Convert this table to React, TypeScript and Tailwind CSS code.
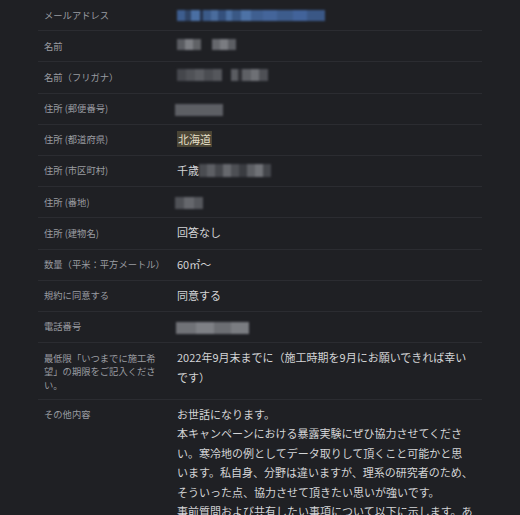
import React from 'react';

type Cell = { w: string; c: string };

// pixelated redaction blocks, as in the reference
function Mosaic({ cells, className }: { cells: Cell[]; className: string }) {
    return (
        <span className={`inline-flex align-middle blur-[0.8px] ${className}`}>
            {cells.map((cell, i) => (
                <span key={i} className={`${cell.w} ${cell.c} h-full`} />
            ))}
        </span>
    );
}

const emailCells: Cell[] = [
    { w: 'w-[8px]', c: 'bg-[#3d5d8e]' },
    { w: 'w-[6px]', c: 'bg-[#2f4466]' },
    { w: 'w-[9px]', c: 'bg-[#4a6fa3]' },
    { w: 'w-[3px]', c: 'bg-[#25324a]' },
    { w: 'w-[8px]', c: 'bg-[#3b5a88]' },
    { w: 'w-[7px]', c: 'bg-[#4a6c9d]' },
    { w: 'w-[8px]', c: 'bg-[#34507c]' },
    { w: 'w-[6px]', c: 'bg-[#4b6fa1]' },
    { w: 'w-[9px]', c: 'bg-[#3a5885]' },
    { w: 'w-[10px]', c: 'bg-[#4d72a6]' },
    { w: 'w-[12px]', c: 'bg-[#3f5f90]' },
    { w: 'w-[14px]', c: 'bg-[#44659a]' },
    { w: 'w-[16px]', c: 'bg-[#3d5c8c]' },
    { w: 'w-[14px]', c: 'bg-[#42639a]' },
    { w: 'w-[18px]', c: 'bg-[#3a5785]' },
];

function Gray({ w, c }: { w: string; c: string }) {
    return <Mosaic className={`${w} h-[12px]`} cells={[{ w: 'w-full', c }]} />;
}

const labelCls = 'pl-[6px] pr-2 pt-[8.5px] pb-[6.5px] text-[9.3px] leading-[13.5px] text-[#9a9ca1]';
const valueCls = 'pl-[7px] pr-2 pt-[5px] pb-[5.7px] text-[11px] leading-[19.5px] text-[#d3d4d6] whitespace-nowrap';

function Row({ label, children, last }: { label: React.ReactNode; children: React.ReactNode; last?: boolean }) {
    return (
        <div className={`grid grid-cols-[132px_1fr] ${last ? '' : 'border-b border-[#2b2c31]'}`}>
            <div className={labelCls}>{label}</div>
            <div className={valueCls}>{children}</div>
        </div>
    );
}

export default function App() {
    return (
        <div className="h-screen bg-[#1f2024] font-['Noto_Sans_CJK_JP','Noto_Sans',sans-serif] overflow-hidden">
            <div className="ml-[38px] w-[444px]">
                <Row label="メールアドレス">
                    <Mosaic className="h-[11px] w-[150px] mt-[-2px]" cells={emailCells} />
                </Row>
                <Row label="名前">
                    <span className="inline-flex gap-[11px] items-center">
                        <Mosaic className="h-[11px] w-[24px]" cells={[
                            { w: 'w-[8px]', c: 'bg-[#5a5c61]' },
                            { w: 'w-[8px]', c: 'bg-[#7c7e83]' },
                            { w: 'w-[8px]', c: 'bg-[#606266]' },
                        ]} />
                        <Mosaic className="h-[11px] w-[24px]" cells={[
                            { w: 'w-[8px]', c: 'bg-[#66686d]' },
                            { w: 'w-[8px]', c: 'bg-[#7a7c81]' },
                            { w: 'w-[8px]', c: 'bg-[#5c5e63]' },
                        ]} />
                    </span>
                </Row>
                <Row label="名前（フリガナ）">
                    <span className="inline-flex gap-[9px] items-center">
                        <Mosaic className="h-[12px] w-[45px]" cells={[
                            { w: 'w-[9px]', c: 'bg-[#45474c]' },
                            { w: 'w-[9px]', c: 'bg-[#505257]' },
                            { w: 'w-[9px]', c: 'bg-[#5a5c61]' },
                            { w: 'w-[9px]', c: 'bg-[#4b4d52]' },
                            { w: 'w-[9px]', c: 'bg-[#55575c]' },
                        ]} />
                        <Mosaic className="h-[12px] w-[37px]" cells={[
                            { w: 'w-[7px]', c: 'bg-[#5a5c61]' },
                            { w: 'w-[4px]', c: 'bg-[#2e2f34]' },
                            { w: 'w-[9px]', c: 'bg-[#5e6065]' },
                            { w: 'w-[8px]', c: 'bg-[#6e7075]' },
                            { w: 'w-[9px]', c: 'bg-[#4e5055]' },
                        ]} />
                    </span>
                </Row>
                <Row label="住所 (郵便番号)">
                    <Gray w="w-[48px] ml-[-2px]" c="bg-[#5d5f64]" />
                </Row>
                <Row label="住所 (都道府県)">
                    <span className="bg-[#4b4636] text-[#e3dfc6] px-[1px]">北海道</span>
                </Row>
                <Row label="住所 (市区町村)">
                    <span className="inline-flex items-center">
                        千歳
                        <Mosaic className="h-[13px] w-[72px]" cells={[
                            { w: 'w-[8px]', c: 'bg-[#4a4c51]' },
                            { w: 'w-[8px]', c: 'bg-[#5d5f64]' },
                            { w: 'w-[8px]', c: 'bg-[#45474c]' },
                            { w: 'w-[8px]', c: 'bg-[#66686d]' },
                            { w: 'w-[8px]', c: 'bg-[#4d4f54]' },
                            { w: 'w-[8px]', c: 'bg-[#3a3c41]' },
                            { w: 'w-[8px]', c: 'bg-[#5d5f64]' },
                            { w: 'w-[8px]', c: 'bg-[#707277]' },
                            { w: 'w-[8px]', c: 'bg-[#44464b]' },
                        ]} />
                    </span>
                </Row>
                <Row label="住所 (番地)">
                    <Mosaic className="h-[12px] w-[28px] ml-[-2px]" cells={[
                        { w: 'w-[9px]', c: 'bg-[#4f5156]' },
                        { w: 'w-[10px]', c: 'bg-[#65676c]' },
                        { w: 'w-[9px]', c: 'bg-[#55575c]' },
                    ]} />
                </Row>
                <Row label="住所 (建物名)">回答なし</Row>
                <Row label="数量（平米：平方メートル）">60㎡〜</Row>
                <Row label="規約に同意する">同意する</Row>
                <Row label="電話番号">
                    <Mosaic className="h-[12px] w-[73px] ml-[-1px]" cells={[
                        { w: 'w-[20px]', c: 'bg-[#707277]' },
                        { w: 'w-[18px]', c: 'bg-[#7e8085]' },
                        { w: 'w-[17px]', c: 'bg-[#6c6e73]' },
                        { w: 'w-[18px]', c: 'bg-[#7a7c81]' },
                    ]} />
                </Row>
                <Row label={<>最低限「いつまでに施工希<br />望」の期限をご記入くださ<br />い。</>}>
                    2022年9月末までに（施工時期を9月にお願いできれば幸い<br />です）
                </Row>
                <Row last label="その他内容">
                    お世話になります。<br />
                    本キャンペーンにおける暴露実験にぜひ協力させてくださ<br />
                    い。寒冷地の例としてデータ取りして頂くこと可能かと思<br />
                    います。私自身、分野は違いますが、理系の研究者のため、<br />
                    そういった点、協力させて頂きたい思いが強いです。<br />
                    事前質問および共有したい事項について以下に示します。あ
                </Row>
            </div>
        </div>
    );
}
